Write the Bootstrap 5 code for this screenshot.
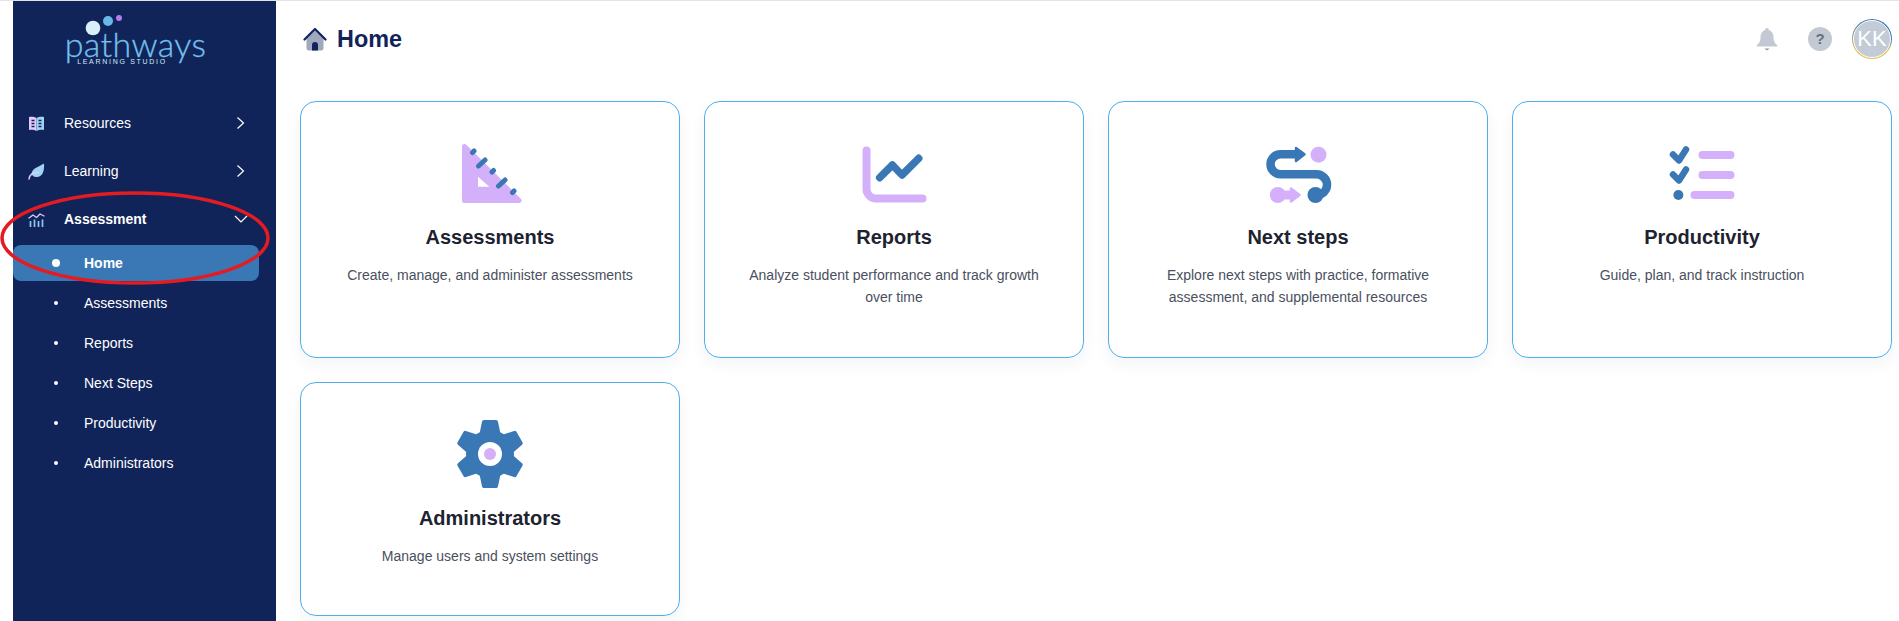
<!DOCTYPE html>
<html lang="en">
<head>
    <meta charset="UTF-8">
    <meta name="viewport" content="width=device-width, initial-scale=1.0">
    <title>Pathways - Home</title>
    <link href="https://cdn.jsdelivr.net/npm/bootstrap@5.3.0/dist/css/bootstrap.min.css" rel="stylesheet">
    <style>
        body {
            font-family: "Liberation Sans", Arial, sans-serif;
            background: #fff;
            height: 100vh;
            overflow: hidden;
        }
        .app-wrap {
            position: relative;
            height: 100vh;
            border-top: 1px solid #e4e4e4;
            padding-left: 13px;
        }
        .side-bar {
            width: 263px;
            flex: 0 0 263px;
            background: #10245a;
            color: #fff;
            font-size: 14px;
        }
        .logo-box {
            height: 98px;
            padding: 9px 18px 0 0;
        }
        .logo-dots { display: block; width: 48px; height: 30px; margin-bottom: -12px; margin-left: 69px; }
        .logo-word {
            font-family: Lato, "Noto Sans", sans-serif;
            font-weight: 300;
            font-size: 34px;
            line-height: 32px;
            letter-spacing: .4px;
            color: #74c0ea;
            -webkit-text-stroke: .3px #74c0ea;
        }
        .logo-sub {
            font-family: "Liberation Sans", sans-serif;
            font-size: 7px;
            line-height: 7px;
            letter-spacing: 1.7px;
            color: #d4ecf8;
            margin-top: -2px;
            margin-right: 27px;
        }
        .menu-row {
            height: 48px;
            padding: 0 28px 0 15px;
            color: #fff;
            text-decoration: none;
        }
        .menu-row svg.menu-ico { width: 17px; height: 17px; margin-right: 19px; flex: 0 0 17px; }
        .sub-row {
            height: 40px;
            margin-right: 17px;
            padding-left: 41px;
            color: #fff;
            text-decoration: none;
        }
        .sub-dot {
            width: 4px;
            height: 4px;
            margin-right: 26px;
            margin-left: 0;
            border-radius: 50%;
            background: #fff;
        }
        .sub-row.is-on {
            height: 36px;
            margin-top: 2px;
            margin-bottom: 2px;
            background: #3a78b5;
            border-radius: 8px;
            font-weight: 700;
        }
        .sub-row.is-on .sub-dot { width: 8px; height: 8px; margin-left: -2px; margin-right: 24px; }
        .main-area {
            padding: 0 7px 0 24px;
            min-width: 0;
        }
        .top-head { height: 76px; margin-bottom: 24px; }
        .page-title {
            font-size: 23.4px;
            font-weight: 700;
            color: #10245a;
            margin: 0;
        }
        .head-ico { width: 24px; height: 24px; margin: 0 10px 0 3px; }
        .bell-ico { width: 24px; height: 24px; margin-right: 29px; }
        .help-ico {
            width: 24px;
            height: 24px;
            margin-right: 20px;
            border-radius: 50%;
            background: #c3c9d3;
            color: #66707f;
            font-size: 15px;
            font-weight: 700;
        }
        .user-ring {
            width: 40px;
            height: 40px;
            padding: 1px;
            border-radius: 50%;
            background: conic-gradient(#3a78b5 0 25%, #e8c15a 35% 65%, #7f9a9c 80%, #3a78b5);
        }
        .user-face {
            width: 100%;
            height: 100%;
            border: 1px solid #fff;
            border-radius: 50%;
            background: #c3ccd6;
            color: #fff;
            font-family: "Liberation Sans", sans-serif;
            font-size: 22px;
            line-height: 1;
        }
        .tile-row { --bs-gutter-x: 24px; --bs-gutter-y: 24px; }
        .tile {
            border: 1px solid #4db0ee;
            border-radius: 16px;
            box-shadow: 0 6px 16px rgba(16, 36, 90, .05);
            padding: 39px 24px 48px;
            text-align: center;
        }
        .tile svg { width: 64px; height: 64px; display: block; margin: 0 auto; overflow: visible; }
        .tile-name {
            font-size: 20px;
            font-weight: 700;
            line-height: 24px;
            color: #1d2330;
            margin: 20px 0 15px;
        }
        .tile-text {
            font-size: 14px;
            line-height: 22.4px;
            color: #4a4f5e;
            margin: 0 auto;
            max-width: 310px;
        }
        .mark-ring {
            position: absolute;
            left: 0;
            top: 0;
            width: 300px;
            height: 300px;
            pointer-events: none;
        }
    </style>
</head>
<body>
    <div class="app-wrap d-flex">
        <aside class="side-bar">
            <div class="logo-box d-flex flex-column align-items-center">
                <svg class="logo-dots align-self-start" viewBox="0 0 48 30">
                    <circle cx="11" cy="18" r="7.3" fill="#d9f0fb"/>
                    <circle cx="26" cy="11" r="5" fill="#6ab8e6"/>
                    <circle cx="37" cy="8" r="3" fill="#b57bee"/>
                </svg>
                <div class="logo-word">pathways</div>
                <div class="logo-sub">LEARNING STUDIO</div>
            </div>

            <a class="menu-row d-flex align-items-center" href="#">
                <svg class="menu-ico" viewBox="0 0 17 17">
                    <path d="M1 2c3-.6 5.500 0 7.500 1v13c-2-1-4.500-1.600-7.500-1z" fill="#e2c8fb"/>
                    <path d="M16 2c-3-.6-5.500 0-7.500 1v13c2-1 4.500-1.600 7.500-1z" fill="#9fd3f2"/>
                    <path d="M3.500 5.500h3M3.500 8.500h3M3.500 11.500h3M10.500 5.500h3M10.500 8.500h3M10.500 11.500h3" stroke="#10245a" stroke-width="1.300"/>
                </svg>
                <span class="flex-grow-1">Resources</span>
                <svg width="14" height="14" viewBox="0 0 14 14" fill="none" stroke="#fff" stroke-width="1.200"><path d="M3.500 1.500 9.500 7l-6 5.500"/></svg>
            </a>
            <a class="menu-row d-flex align-items-center" href="#">
                <svg class="menu-ico" viewBox="0 0 17 17">
                    <path d="M3.500 11C4 5 10 4.500 16 .5c.5 7-1 14-8 13.500-2 0-3.500-1-4.500-3z" fill="#9fd3f2"/>
                    <path d="M1 16c.5-4 4-6.500 9-6.500" fill="none" stroke="#e2c8fb" stroke-width="1.500" stroke-linecap="round"/>
                </svg>
                <span class="flex-grow-1">Learning</span>
                <svg width="14" height="14" viewBox="0 0 14 14" fill="none" stroke="#fff" stroke-width="1.200"><path d="M3.500 1.500 9.500 7l-6 5.500"/></svg>
            </a>
            <a class="menu-row d-flex align-items-center fw-bold" href="#">
                <svg class="menu-ico" viewBox="0 0 17 17">
                    <path d="M1 7l4-3 3.500 2.500L12 3l4 2" fill="none" stroke="#e2c8fb" stroke-width="1.300" stroke-linecap="round" stroke-linejoin="round"/>
                    <path d="M2.500 10v6M6.500 8.500V16M10.500 10v6M14.500 8.500V16" stroke="#8cc8ee" stroke-width="1.700"/>
                </svg>
                <span class="flex-grow-1">Assessment</span>
                <svg width="14" height="14" viewBox="0 0 14 14" fill="none" stroke="#fff" stroke-width="1.200"><path d="M1 4l6 6 6-6"/></svg>
            </a>

            <a class="sub-row is-on d-flex align-items-center" href="#"><span class="sub-dot"></span>Home</a>
            <a class="sub-row d-flex align-items-center" href="#"><span class="sub-dot"></span>Assessments</a>
            <a class="sub-row d-flex align-items-center" href="#"><span class="sub-dot"></span>Reports</a>
            <a class="sub-row d-flex align-items-center" href="#"><span class="sub-dot"></span>Next Steps</a>
            <a class="sub-row d-flex align-items-center" href="#"><span class="sub-dot"></span>Productivity</a>
            <a class="sub-row d-flex align-items-center" href="#"><span class="sub-dot"></span>Administrators</a>
        </aside>

        <main class="main-area flex-grow-1">
            <header class="top-head d-flex align-items-center">
                <svg class="head-ico" viewBox="0 0 24 24">
                    <path d="M3.500 11.500 12 3.500l8.500 8V21a2.500 2.500 0 0 1-2.500 2.500H6A2.500 2.500 0 0 1 3.500 21z" fill="#a0a8bd"/>
                    <path d="M1.500 12.500 12 2l10.500 10.500" fill="none" stroke="#10245a" stroke-width="2.200" stroke-linecap="round" stroke-linejoin="round"/>
                    <path d="M9 23.500V18a3 3 0 0 1 6 0v5.500z" fill="#10245a"/>
                </svg>
                <h1 class="page-title flex-grow-1">Home</h1>
                <svg class="bell-ico" viewBox="0 0 24 24" fill="#c3c9d3">
                    <path d="M12 1a1.800 1.800 0 0 1 1.800 2C17 4 18.500 7 18.500 10c0 4 1 6 3.500 8 .6.600.4 1.500-.5 1.500h-19c-.9 0-1.100-.9-.5-1.500 2.500-2 3.500-4 3.500-8 0-3 1.500-6 4.700-7A1.800 1.800 0 0 1 12 1z"/>
                    <path d="M9.500 21.500h5L12 23.500z" fill="#8b93a1"/>
                </svg>
                <div class="help-ico d-flex align-items-center justify-content-center">?</div>
                <div class="user-ring">
                    <div class="user-face d-flex align-items-center justify-content-center">KK</div>
                </div>
            </header>

            <div class="row tile-row">
                <div class="col-3">
                    <div class="card tile h-100">
                        <svg viewBox="0 0 64 64">
                            <path d="M6.500 5.500 61 59.500H6.500z" fill="#d4b0fb" stroke="#d4b0fb" stroke-width="5" stroke-linejoin="round"/>
                            <path d="M20 35.700v10h11.300z" fill="#fff"/>
                            <path d="M14.500 11.500l1.500-1.500M20.500 25l6.500-6M34 31l1.500-1.500M40.500 45l6.500-6M54.500 51.500l1.500-1.500" stroke="#3a78b5" stroke-width="5" stroke-linecap="round"/>
                        </svg>
                        <div class="tile-name">Assessments</div>
                        <p class="tile-text">Create, manage, and administer assessments</p>
                    </div>
                </div>
                <div class="col-3">
                    <div class="card tile h-100">
                        <svg viewBox="0 0 64 64" fill="none" stroke-linecap="round" stroke-linejoin="round">
                            <path d="M4.500 9.500V48a9.500 9.500 0 0 0 9.500 9.500h46.500" stroke="#d4b0fb" stroke-width="8"/>
                            <path d="M17.700 36.700 30.400 24 40 34l16.700-16.700" stroke="#3a78b5" stroke-width="7.500"/>
                        </svg>
                        <div class="tile-name">Reports</div>
                        <p class="tile-text">Analyze student performance and track growth over time</p>
                    </div>
                </div>
                <div class="col-3">
                    <div class="card tile h-100">
                        <svg viewBox="0 0 64 64">
                            <path d="M32 13.300H14.500a10 10 0 0 0 0 20h36a10.500 10.500 0 0 1 10.500 10.500c0 5.500-4 9.500-10 10.500" fill="none" stroke="#3a78b5" stroke-width="8.500"/>
                            <path d="M30 7l8.500 6.300L30 20z" fill="#3a78b5" stroke="#3a78b5" stroke-width="2.500" stroke-linejoin="round"/>
                            <circle cx="49.500" cy="54" r="8" fill="#3a78b5"/>
                            <circle cx="52.500" cy="13.700" r="8" fill="#d4b0fb"/>
                            <circle cx="11.800" cy="54" r="8" fill="#d4b0fb"/>
                            <path d="M17 54h9" stroke="#d4b0fb" stroke-width="9"/>
                            <path d="M25 47.500l8.500 6.500-8.500 6.500z" fill="#d4b0fb" stroke="#d4b0fb" stroke-width="2.500" stroke-linejoin="round"/>
                        </svg>
                        <div class="tile-name">Next steps</div>
                        <p class="tile-text">Explore next steps with practice, formative assessment, and supplemental resources</p>
                    </div>
                </div>
                <div class="col-3">
                    <div class="card tile h-100">
                        <svg viewBox="0 0 64 64" fill="none" stroke-linecap="round" stroke-linejoin="round">
                            <path d="M3 13.500l6 6 7-11M3 33.500l6 6 7-11" stroke="#3a78b5" stroke-width="6.500"/>
                            <circle cx="8.400" cy="54" r="5" fill="#3a78b5"/>
                            <path d="M32.500 14h28M32.500 34h28M24.500 54h36" stroke="#d4b0fb" stroke-width="8"/>
                        </svg>
                        <div class="tile-name">Productivity</div>
                        <p class="tile-text">Guide, plan, and track instruction</p>
                    </div>
                </div>
                <div class="col-3">
                    <div class="card tile">
                        <svg viewBox="0 0 64 64">
                            <g fill="#3a78b5" stroke="#3a78b5" stroke-width="4" stroke-linejoin="round">
                                <circle cx="32" cy="32" r="22"/>
                                <path d="M26 0h12l2.500 12h-17z"/>
                                <path d="M26 0h12l2.500 12h-17z" transform="rotate(60 32 32)"/>
                                <path d="M26 0h12l2.500 12h-17z" transform="rotate(120 32 32)"/>
                                <path d="M26 0h12l2.500 12h-17z" transform="rotate(180 32 32)"/>
                                <path d="M26 0h12l2.500 12h-17z" transform="rotate(240 32 32)"/>
                                <path d="M26 0h12l2.500 12h-17z" transform="rotate(300 32 32)"/>
                            </g>
                            <circle cx="32" cy="32" r="12" fill="#fff"/>
                            <circle cx="32" cy="32" r="6" fill="#d4b0fb"/>
                        </svg>
                        <div class="tile-name">Administrators</div>
                        <p class="tile-text">Manage users and system settings</p>
                    </div>
                </div>
            </div>
        </main>

        <svg class="mark-ring" viewBox="0 0 300 300">
            <ellipse cx="135" cy="237" rx="133" ry="45" fill="none" stroke="#e31b23" stroke-width="3.500"/>
        </svg>
    </div>

    <script src="https://cdn.jsdelivr.net/npm/bootstrap@5.3.0/dist/js/bootstrap.bundle.min.js"></script>
</body>
</html>
